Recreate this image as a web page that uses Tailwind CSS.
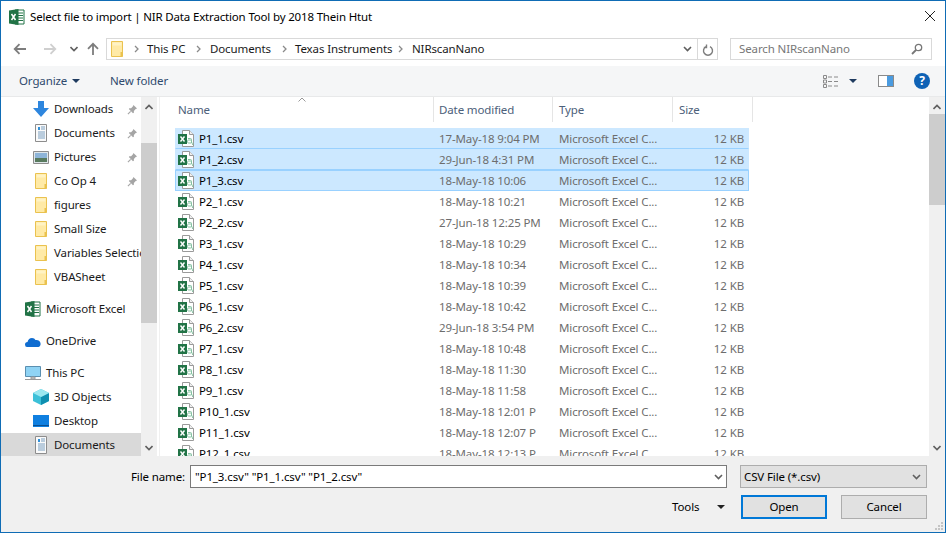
<!DOCTYPE html>
<html lang="en">
<head>
<meta charset="UTF-8">
<title>Select file to import</title>
<script src="https://cdn.jsdelivr.net/npm/@tailwindcss/browser@4"></script>
</head>
<body class="w-[946px] h-[533px] overflow-hidden bg-white font-['Noto_Sans','Open_Sans',sans-serif] text-[11.5px] tracking-[-0.12px] text-[#1a1a1a]">
<svg class="hidden">
  <symbol id="folder" viewBox="0 0 16 16"><path d="M2.500.5h11v15h-11z" fill="#ffeaa6" stroke="#eac24f"/><path d="M3.500 1.500h9v3h-9z" fill="#fff3c4"/><path d="M11.500 11v4.500h2v-4.500z" fill="#eac24f"/></symbol>
  <symbol id="pin" viewBox="0 0 12 12"><path d="M7 1l4 4-1.500.5-2 2v2L6.500 10 2 5.500l.5-1h2l2-2z" fill="#a5a5a5"/><path d="M4 8L1 11" stroke="#a5a5a5" stroke-width="1.200"/></symbol>
  <symbol id="doc" viewBox="0 0 16 18"><path d="M2.500.5h11v17h-11z" fill="#fafafa" stroke="#8d8d8d"/><path d="M5 3h2v3H5z" fill="#2f8fd8"/><path d="M8 3h4M8 5h4M5 8h7M5 10h7M5 12h7M5 14h7" stroke="#7b9fc0"/></symbol>
  <symbol id="xfile" viewBox="0 0 17 18"><path d="M4.500.5h7l4 4v12h-11z" fill="#fff" stroke="#9a9a9a"/><path d="M11.500.5v4h4" fill="#f0f0f0" stroke="#9a9a9a"/><rect x="0" y="4" width="9" height="10" fill="#217346"/><path d="M2.500 6.500l4 5M6.500 6.500l-4 5" stroke="#fff" stroke-width="1.400"/><path d="M10 8.500h2.500q1 0 1 1v3.500h-3q-1 0-1-1.500t1-1.500h3M15 12.500l-.5 2.500" fill="none" stroke="#86c3a3"/></symbol>
  <symbol id="xl" viewBox="0 0 16 16"><path d="M6 1h9v14H6z" fill="#fff" stroke="#217346"/><path d="M9 4h5M9 6.500h5M9 9h5M9 11.500h5" stroke="#217346"/><path d="M0 1.500L9.500 0v16L0 14.500z" fill="#217346"/><path d="M2.500 5l4 6M6.500 5l-4 6" stroke="#fff" stroke-width="1.500"/></symbol>
  <symbol id="sdown" viewBox="0 0 8 6"><path d="M0.500 1L4 4.500 7.500 1" fill="none" stroke="#5f5f5f" stroke-width="1.600"/></symbol>
  <symbol id="sup" viewBox="0 0 8 6"><path d="M0.500 5L4 1.500 7.500 5" fill="none" stroke="#5f5f5f" stroke-width="1.600"/></symbol>
  <symbol id="crumb" viewBox="0 0 5 8"><path d="M1 1l3 3-3 3" fill="none" stroke="#8a8a8a" stroke-width="1.300"/></symbol>
</svg>

<div class="w-full h-full flex flex-col border border-[#0f6cb5]">
  <!-- title bar -->
  <div class="h-[30px] mt-[1px] flex items-center shrink-0">
    <svg class="ml-[8px] w-[16px] h-[16px]"><use href="#xl"/></svg>
    <span class="ml-[5px] text-black tracking-[-0.17px]">Select file to import | NIR Data Extraction Tool by 2018 Thein Htut</span>
    <svg class="ml-auto mr-[9px] -mt-[2px] w-[12px] h-[12px]" viewBox="0 0 12 12"><path d="M1 1l10 10M11 1L1 11" stroke="#222" stroke-width="1"/></svg>
  </div>

  <!-- nav row -->
  <div class="h-[34px] flex items-center shrink-0">
    <svg class="ml-[12px] w-[14px] h-[12px]" viewBox="0 0 14 12"><path d="M13 6H2M6.500 1.200L1.700 6l4.800 4.800" fill="none" stroke="#7d7d7d" stroke-width="1.800"/></svg>
    <svg class="ml-[16px] w-[14px] h-[12px]" viewBox="0 0 14 12"><path d="M1 6h11M7.500 1.200L12.300 6l-4.800 4.800" fill="none" stroke="#cfcfcf" stroke-width="1.800"/></svg>
    <svg class="ml-[13px] w-[8px] h-[6px]"><use href="#sdown"/></svg>
    <svg class="ml-[9px] w-[12px] h-[14px]" viewBox="0 0 12 14"><path d="M6 13V2M1 6.800L6 1.800l5 5" fill="none" stroke="#7d7d7d" stroke-width="1.800"/></svg>
    <div class="ml-[7px] w-[612px] h-[22px] border border-[#d9d9d9] flex items-center whitespace-nowrap">
      <svg class="ml-[2px] w-[16px] h-[16px]"><use href="#folder"/></svg>
      <svg class="ml-[9px] w-[5px] h-[8px]"><use href="#crumb"/></svg><span class="ml-[8px] w-[41px]">This PC</span>
      <svg class="ml-[8px] w-[5px] h-[8px]"><use href="#crumb"/></svg><span class="ml-[9px] w-[63px]">Documents</span>
      <svg class="ml-[9px] w-[5px] h-[8px]"><use href="#crumb"/></svg><span class="ml-[8px] w-[95px]">Texas Instruments</span>
      <svg class="ml-[8px] w-[5px] h-[8px]"><use href="#crumb"/></svg><span class="ml-[9px]">NIRscanNano</span>
      <svg class="ml-auto mr-[5px] w-[9px] h-[6px]"><use href="#sdown"/></svg>
      <div class="w-[20px] h-full border-l border-[#d9d9d9] flex items-center justify-center">
        <svg class="w-[12px] h-[13px]" viewBox="0 0 12 13"><path d="M4 3.200a4.500 4.500 0 1 0 4 0M4.500 1v3H1.800" fill="none" stroke="#7d7d7d" stroke-width="1.400" transform="translate(0 .5)"/></svg>
      </div>
    </div>
    <div class="ml-[12px] w-[202px] h-[22px] border border-[#d9d9d9] flex items-center px-[8px] text-[#777]">
      <span>Search NIRscanNano</span>
      <svg class="ml-auto w-[12px] h-[12px]" viewBox="0 0 12 12"><circle cx="7.500" cy="4.500" r="3.200" fill="none" stroke="#777" stroke-width="1.300"/><path d="M5 7l-4 4" stroke="#777" stroke-width="1.800"/></svg>
    </div>
  </div>

  <!-- toolbar -->
  <div class="h-[31px] bg-[#f5f6f7] border-b border-[#e8e9ea] flex items-center shrink-0 text-[#2f4a6d]">
    <span class="ml-[18px] w-[53px]">Organize</span>
    <span class="w-0 h-0 border-x-[4px] border-x-transparent border-t-[4px] border-t-[#1e3a5f]"></span>
    <span class="ml-[30px]">New folder</span>
    <svg class="ml-auto w-[16px] h-[13px]" viewBox="0 0 16 13"><path d="M.5.500h3v3h-3zM.5 5h3v3h-3zM.5 9.500h3v3h-3z" fill="none" stroke="#8a8a8a"/><path d="M5 2h4M11 2h4M5 6.500h4M11 6.500h4M5 11h4M11 11h4" stroke="#8a8a8a"/></svg>
    <span class="ml-[10px] w-0 h-0 border-x-[4px] border-x-transparent border-t-[4px] border-t-[#1e3a5f]"></span>
    <div class="ml-[21px] w-[16px] h-[12px] border border-[#8a8a8a] flex justify-end bg-white"><div class="w-[6px] h-full bg-[#4a9be0]"></div></div>
    <div class="ml-[20px] mr-[15px] w-[16px] h-[16px] rounded-full bg-[#0f62b5] text-white font-bold text-[12px] leading-[16px] text-center">?</div>
  </div>

  <!-- main area -->
  <div class="h-[359px] flex shrink-0 overflow-hidden">
    <!-- sidebar -->
    <div class="w-[140px] shrink-0 overflow-hidden">
      <div class="flex flex-col whitespace-nowrap">
        <div class="h-[24px] flex items-center pl-[32px]"><svg class="w-[16px] h-[16px]" viewBox="0 0 16 16"><path d="M5 0h6v7h5l-8 9-8-9h5z" fill="#2e86de"/></svg><span class="ml-[5px] w-[73px]">Downloads</span><svg class="w-[11px] h-[11px]"><use href="#pin"/></svg></div>
        <div class="h-[24px] flex items-center pl-[32px]"><svg class="w-[16px] h-[18px]"><use href="#doc"/></svg><span class="ml-[5px] w-[73px]">Documents</span><svg class="w-[11px] h-[11px]"><use href="#pin"/></svg></div>
        <div class="h-[24px] flex items-center pl-[32px]"><svg class="w-[16px] h-[13px]" viewBox="0 0 16 13"><path d="M.5.500h15v12H.5z" fill="#dfe6ea" stroke="#8d8d8d"/><path d="M2 2h12v5H2z" fill="#8db4d8"/><path d="M2 7h12v4H2z" fill="#587a5e"/></svg><span class="ml-[5px] w-[73px]">Pictures</span><svg class="w-[11px] h-[11px]"><use href="#pin"/></svg></div>
        <div class="h-[24px] flex items-center pl-[32px]"><svg class="w-[16px] h-[16px]"><use href="#folder"/></svg><span class="ml-[5px] w-[73px]">Co Op 4</span><svg class="w-[11px] h-[11px]"><use href="#pin"/></svg></div>
        <div class="h-[24px] flex items-center pl-[32px]"><svg class="w-[16px] h-[16px]"><use href="#folder"/></svg><span class="ml-[5px]">figures</span></div>
        <div class="h-[24px] flex items-center pl-[32px]"><svg class="w-[16px] h-[16px]"><use href="#folder"/></svg><span class="ml-[5px]">Small Size</span></div>
        <div class="h-[24px] flex items-center pl-[32px]"><svg class="w-[16px] h-[16px] shrink-0"><use href="#folder"/></svg><span class="ml-[5px]">Variables Selection</span></div>
        <div class="h-[24px] flex items-center pl-[32px]"><svg class="w-[16px] h-[16px]"><use href="#folder"/></svg><span class="ml-[5px]">VBASheet</span></div>
        <div class="h-[24px] mt-[8px] flex items-center pl-[24px]"><svg class="w-[16px] h-[16px]"><use href="#xl"/></svg><span class="ml-[5px]">Microsoft Excel</span></div>
        <div class="h-[24px] mt-[8px] flex items-center pl-[24px]"><svg class="w-[16px] h-[11px]" viewBox="0 0 16 11"><path d="M0 8.500Q0 6 2.500 6 3.500 2 7 2q2.500 0 3.500 2 4-.5 5 3 .5 3-2 4H2Q0 11 0 8.500z" fill="#0f6cd0"/></svg><span class="ml-[5px]">OneDrive</span></div>
        <div class="h-[24px] mt-[8px] flex items-center pl-[24px]"><svg class="w-[16px] h-[15px]" viewBox="0 0 16 15"><path d="M.5.500h15v10H.5z" fill="#8fd3f4" stroke="#5a8fb0"/><path d="M6 11h4v2H6zM0 13.500h16" stroke="#9a9a9a" fill="#ccc"/></svg><span class="ml-[5px]">This PC</span></div>
        <div class="h-[24px] flex items-center pl-[32px]"><svg class="w-[16px] h-[16px]" viewBox="0 0 16 16"><path d="M8 0l8 4v8l-8 4-8-4V4z" fill="#3cc0d8"/><path d="M8 8l8-4v8l-8 4z" fill="#0f8fb0"/><path d="M8 0l8 4-8 4-8-4z" fill="#9be8f0"/></svg><span class="ml-[5px]">3D Objects</span></div>
        <div class="h-[24px] flex items-center pl-[32px]"><svg class="w-[16px] h-[12px]" viewBox="0 0 16 12"><path d="M0 0h16v12H0z" fill="#0f7fe0"/><path d="M0 10.500h16" stroke="#0a4f90"/></svg><span class="ml-[5px]">Desktop</span></div>
        <div class="h-[24px] flex items-center pl-[32px] bg-[#d9d9d9]"><svg class="w-[16px] h-[18px]"><use href="#doc"/></svg><span class="ml-[5px]">Documents</span></div>
      </div>
    </div>
    <!-- sidebar scrollbar -->
    <div class="w-[16px] shrink-0 bg-[#f0f0f0] flex flex-col items-center">
      <svg class="mt-[7px] w-[8px] h-[6px]"><use href="#sup"/></svg>
      <div class="mt-[33px] w-full h-[180px] bg-[#cdcdcd]"></div>
      <svg class="mt-auto mb-[5px] w-[8px] h-[6px]"><use href="#sdown"/></svg>
    </div>
    <div class="w-[3px] shrink-0 border-r border-[#f0f0f0]"></div>

    <!-- file list -->
    <div class="flex-1 min-w-0 relative overflow-hidden">
      <svg class="absolute left-[138px] top-0 w-[8px] h-[5px]" viewBox="0 0 8 5"><path d="M.5 4.500L4 1l3.500 3.500" fill="none" stroke="#999"/></svg>
      <div class="h-[31px] flex text-[#4c607a]">
        <div class="w-[274px] h-[25px] pl-[18px] pt-[4px] border-r border-[#e5e5e5]">Name</div>
        <div class="w-[119px] h-[25px] pl-[5px] pt-[4px] border-r border-[#e5e5e5]">Date modified</div>
        <div class="w-[120px] h-[25px] pl-[6px] pt-[4px] border-r border-[#e5e5e5]">Type</div>
        <div class="w-[80px] h-[25px] pl-[6px] pt-[4px] border-r border-[#e5e5e5]">Size</div>
      </div>
      <div id="rows" class="ml-[15px] w-[574px]"></div>
    </div>

    <!-- file list scrollbar -->
    <div class="w-[16px] shrink-0 bg-[#f0f0f0] flex flex-col items-center">
      <svg class="mt-[7px] w-[8px] h-[6px]"><use href="#sup"/></svg>
      <div class="mt-[4px] w-full h-[91px] bg-[#cdcdcd]"></div>
      <svg class="mt-auto mb-[5px] w-[8px] h-[6px]"><use href="#sdown"/></svg>
    </div>
  </div>

  <!-- bottom panel -->
  <div class="flex-1 bg-[#f0f0f0] relative">
    <div class="flex items-center mt-[9px] h-[23px]">
      <span class="ml-[130px] w-[59px] text-black">File name:</span>
      <div class="w-[537px] h-[23px] bg-white border border-[#7a7a7a] flex items-center pl-[4px] text-black">
        <span>"P1_3.csv" "P1_1.csv" "P1_2.csv"</span>
        <svg class="ml-auto mr-[3px] w-[9px] h-[6px]"><use href="#sdown"/></svg>
      </div>
      <div class="ml-[13px] w-[187px] h-[23px] bg-[#e1e1e1] border border-[#adadad] flex items-center pl-[3px] text-black">
        <span>CSV File (*.csv)</span>
        <svg class="ml-auto mr-[5px] w-[9px] h-[6px]"><use href="#sdown"/></svg>
      </div>
    </div>
    <div class="flex items-center mt-[7px] h-[24px] text-black">
      <span class="ml-[671px] w-[45px]">Tools</span>
      <span class="w-0 h-0 border-x-[4px] border-x-transparent border-t-[4px] border-t-[#222]"></span>
      <button class="ml-[16px] w-[86px] h-[24px] bg-[#e1e1e1] border-2 border-[#0078d7]">Open</button>
      <button class="ml-[14px] w-[86px] h-[24px] bg-[#e1e1e1] border border-[#adadad]">Cancel</button>
    </div>
    <svg class="absolute right-[1px] bottom-[1px] w-[10px] h-[10px]" viewBox="0 0 10 10"><path d="M7 1h2v2H7zM4 4h2v2H4zM7 4h2v2H7zM1 7h2v2H1zM4 7h2v2H4zM7 7h2v2H7z" fill="#c4c4c4"/></svg>
  </div>
</div>

<script>
  // file rows, first three are selected
  const files = [
    ['P1_1.csv', '17-May-18 9:04 PM'], ['P1_2.csv', '29-Jun-18 4:31 PM'], ['P1_3.csv', '18-May-18 10:06'],
    ['P2_1.csv', '18-May-18 10:21'], ['P2_2.csv', '27-Jun-18 12:25 PM'], ['P3_1.csv', '18-May-18 10:29'],
    ['P4_1.csv', '18-May-18 10:34'], ['P5_1.csv', '18-May-18 10:39'], ['P6_1.csv', '18-May-18 10:42'],
    ['P6_2.csv', '29-Jun-18 3:54 PM'], ['P7_1.csv', '18-May-18 10:48'], ['P8_1.csv', '18-May-18 11:30'],
    ['P9_1.csv', '18-May-18 11:58'], ['P10_1.csv', '18-May-18 12:01 P'], ['P11_1.csv', '18-May-18 12:07 P'],
    ['P12_1.csv', '18-May-18 12:13 P']
  ];
  document.getElementById('rows').innerHTML = files.map((f, i) => {
    const rowClass = i === 2 ? 'bg-[#cce8ff] border border-[#99d1ff]'
      : i < 2 ? 'bg-[#cce8ff] border border-transparent border-b-[#99d1ff]'
      : 'border border-transparent';
    return `<div class="h-[21px] flex items-center whitespace-nowrap ${rowClass}">
      <svg class="ml-[2px] w-[17px] h-[18px] shrink-0"><use href="#xfile"/></svg>
      <span class="ml-[4px] w-[240px] text-black">${f[0]}</span>
      <span class="w-[120px] text-[#6d6d6d] overflow-hidden">${f[1]}</span>
      <span class="w-[120px] text-[#6d6d6d]">Microsoft Excel C...</span>
      <span class="w-[65px] text-right text-[#6d6d6d]">12 KB</span>
    </div>`;
  }).join('');
</script>
</body>
</html>
